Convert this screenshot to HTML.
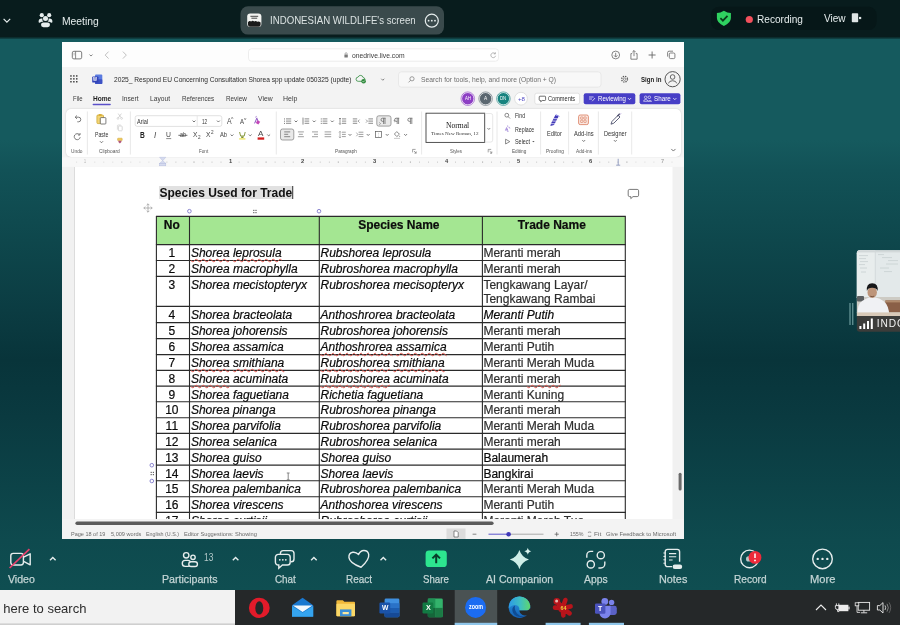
<!DOCTYPE html>
<html lang="en">
<head>
<meta charset="utf-8">
<title>Zoom Meeting</title>
<style>
*{box-sizing:border-box;margin:0;padding:0}
html,body{width:900px;height:625px;overflow:hidden;background:#0f5053;font-family:"Liberation Sans",sans-serif}
.abs{position:absolute}
.t{position:absolute;white-space:nowrap;transform-origin:0 50%;line-height:1}
#stage{will-change:transform;position:absolute;left:0;top:0;width:900px;height:625px;overflow:hidden;background:linear-gradient(180deg,#155a5e 0,#155a5e 140px,#125257 170px,#0e474c 241px,#0b3c42 311px,#08343a 360px,#0a3a40 417px,#0c4348 487px,#0e4a4e 540px,#0f4e51 590px)}
/* ---------- zoom top bar ---------- */
#topbar{position:absolute;left:0;top:0;width:900px;height:39px;background:linear-gradient(180deg,#081c1d 0,#081c1d 36.6px,#0d3638 38px,#11484b 39px)}
/* ---------- zoom bottom bar ---------- */
#botbar{position:absolute;left:0;top:540px;width:900px;height:50px;background:transparent}
/* ---------- taskbar ---------- */
#taskbar{position:absolute;left:0;top:590px;width:900px;height:35px;background:#252829}
/* ---------- shared window ---------- */
#win{position:absolute;left:62px;top:42px;width:622px;height:497px;background:#f3f3f3;overflow:hidden}
#wi{position:absolute;left:-62px;top:-42px;width:900px;height:625px}
#btool{position:absolute;left:62px;top:42px;width:622px;height:25px;background:#fdfdfd}
#ribbon{position:absolute;left:66px;top:108.5px;width:614.5px;height:48px;background:#fff;border-radius:5px;box-shadow:0 0 2px rgba(0,0,0,.18)}
#page{position:absolute;left:74px;top:167px;width:598.5px;height:352px;background:#fff;overflow:hidden;border-left:1px solid #dcdcdc}
/* ---------- document ---------- */
#doc{position:absolute;left:-75px;top:-167px;width:700px;height:540px;font-family:"Liberation Sans",sans-serif;font-size:12px;color:#111}
.c{position:absolute;white-space:nowrap;font-size:12px;line-height:14px;color:#0a0a0a;-webkit-text-stroke:0.2px currentColor;overflow:visible}
.c.n{text-align:center}
.c.g{color:#2e2e2e}
.c.it{font-style:italic}
.c.hd{font-weight:bold;text-align:center;color:#0c0c0c}
.c u,.sq{text-decoration:underline wavy #e0574f;text-decoration-thickness:0.6px;text-underline-offset:0.5px;text-decoration-skip-ink:none}
</style>
</head>
<body>
<div id="stage">

<!-- ============ SHARED WINDOW ============ -->
<div id="win"><div id="wi">
  <div id="btool"></div>
<!--BROWSER-->
<svg class="abs" style="left:0;top:0" width="900" height="625" viewBox="0 0 900 625" fill="none"><rect x="72.3" y="51.3" width="9.4" height="7.6" rx="1.6" stroke="#6d6d6d" stroke-width="0.9"/><path d="M75.6 51.3v7.6" stroke="#6d6d6d" stroke-width="0.8"/><path d="M73.6 53.3h1M73.6 54.8h1" stroke="#6d6d6d" stroke-width="0.6"/><path d="M89.5 54.55 l1.5 1.5 l1.5 -1.5" stroke="#666" stroke-width="0.8"/><path d="M108.6 51.6l-3.4 3.5l3.4 3.5" stroke="#b9b9b9" stroke-width="0.9"/><path d="M122.9 51.6l3.4 3.5l-3.4 3.5" stroke="#b9b9b9" stroke-width="0.9"/><rect x="248.5" y="48.8" width="250" height="12.4" rx="3" fill="#fff" stroke="#e9e9e9" stroke-width="0.8"/><rect x="344.4" y="54.6" width="3.4" height="2.8" rx="0.5" fill="#7a7a7a"/><path d="M345.1 54.6v-0.9a1 1 0 0 1 2 0v0.9" stroke="#7a7a7a" stroke-width="0.6"/><path d="M495 53.6a2.4 2.4 0 1 0 .6 2.2" stroke="#9a9a9a" stroke-width="0.7"/><path d="M495.4 52.3v1.6h-1.6" stroke="#9a9a9a" stroke-width="0.7"/><circle cx="615.7" cy="55" r="3.9" stroke="#666" stroke-width="0.8"/><path d="M615.7 52.8v4M614 55.4l1.7 1.7l1.7-1.7" stroke="#666" stroke-width="0.8"/><path d="M632.2 53.6h-1.3v5.6h6.2v-5.6h-1.3" stroke="#666" stroke-width="0.8"/><path d="M634 56.2v-5.6M632.3 52.2l1.7-1.7l1.7 1.7" stroke="#666" stroke-width="0.8"/><path d="M648.6 55h7M652.1 51.5v7" stroke="#666" stroke-width="0.9"/><rect x="669.3" y="53" width="5.6" height="5.6" rx="1.2" stroke="#666" stroke-width="0.8"/><path d="M667.6 56.6v-4a1.4 1.4 0 0 1 1.4-1.4h4" stroke="#666" stroke-width="0.8"/></svg>
<div class="t" style="left:351.5px;top:51.5px;font-size:7.5px;transform:scaleX(0.900);color:#3c3c3c">onedrive.live.com</div>
<!--/BROWSER-->
<!--WORDHDR-->
<svg class="abs" style="left:0;top:0" width="900" height="625" viewBox="0 0 900 625" fill="none"><rect x="70.2" y="75.2" width="1.5" height="1.5" fill="#444"/><rect x="70.2" y="78.1" width="1.5" height="1.5" fill="#444"/><rect x="70.2" y="81.0" width="1.5" height="1.5" fill="#444"/><rect x="73.1" y="75.2" width="1.5" height="1.5" fill="#444"/><rect x="73.1" y="78.1" width="1.5" height="1.5" fill="#444"/><rect x="73.1" y="81.0" width="1.5" height="1.5" fill="#444"/><rect x="76.0" y="75.2" width="1.5" height="1.5" fill="#444"/><rect x="76.0" y="78.1" width="1.5" height="1.5" fill="#444"/><rect x="76.0" y="81.0" width="1.5" height="1.5" fill="#444"/><rect x="95" y="74.6" width="7.3" height="9.4" rx="1" fill="#5a7be0"/><rect x="95" y="79.3" width="7.3" height="4.7" rx="0.8" fill="#3d52c4"/><rect x="92.2" y="76.4" width="6.2" height="6.2" rx="0.9" fill="#3143b8"/><path d="M358.2 81.3h4.6a1.9 1.9 0 0 0 .3-3.8a2.6 2.6 0 0 0-5-.4a2.1 2.1 0 0 0 .1 4.2z" stroke="#2f8a3c" stroke-width="0.8"/><circle cx="363.6" cy="81.3" r="2.3" fill="#2f8a3c"/><path d="M362.5 81.3l.8.8l1.4-1.5" stroke="#fff" stroke-width="0.6"/><path d="M381.3 78.75 l1.5 1.5 l1.5 -1.5" stroke="#666" stroke-width="0.8"/><rect x="398.5" y="71.8" width="202.5" height="15.4" rx="3" fill="#f8f8f8" stroke="#e4e4e4" stroke-width="0.8"/><circle cx="412" cy="78.8" r="2.1" stroke="#777" stroke-width="0.7"/><path d="M410.5 80.4l-2 2" stroke="#777" stroke-width="0.7"/><circle cx="624.6" cy="79.2" r="2.9" stroke="#555" stroke-width="1.3" stroke-dasharray="1.3 1"/><circle cx="624.6" cy="79.2" r="1.2" stroke="#555" stroke-width="0.6"/><circle cx="672.6" cy="79.2" r="7.6" stroke="#444" stroke-width="0.9"/><circle cx="672.6" cy="77" r="2.3" stroke="#444" stroke-width="0.8"/><path d="M668.4 83.4a4.3 3.4 0 0 1 8.4 0" stroke="#444" stroke-width="0.8"/><rect x="92.6" y="103.7" width="18.2" height="1.5" rx="0.7" fill="#5b50c9"/><circle cx="467.8" cy="98.7" r="6.2" fill="#8d3fc4" stroke="#fff" stroke-width="0.8"/><circle cx="467.8" cy="98.7" r="6.8" stroke="#8d3fc4" stroke-width="0.6"/><circle cx="485.6" cy="98.7" r="6.2" fill="#5b6770" stroke="#fff" stroke-width="0.8"/><circle cx="485.6" cy="98.7" r="6.8" stroke="#5b6770" stroke-width="0.6"/><circle cx="503.4" cy="98.7" r="6.2" fill="#17837f" stroke="#fff" stroke-width="0.8"/><circle cx="503.4" cy="98.7" r="6.8" stroke="#17837f" stroke-width="0.6"/><circle cx="521" cy="98.7" r="6.4" fill="#fff" stroke="#d6d6d6" stroke-width="0.7"/><rect x="534.8" y="93.2" width="44.8" height="11" rx="2" fill="#fff" stroke="#d9d9d9" stroke-width="0.7"/><path d="M540 96.2h4.8a.8.8 0 0 1 .8.8v2.7a.8.8 0 0 1-.8.8h-2.6l-1.5 1.3v-1.3h-.7a.8.8 0 0 1-.8-.8v-2.7a.8.8 0 0 1 .8-.8z" stroke="#333" stroke-width="0.7"/><rect x="583.7" y="93.2" width="51.6" height="11" rx="2" fill="#473ec6"/><rect x="639.6" y="93.2" width="40.8" height="11" rx="2" fill="#473ec6"/><path d="M589 97h4.6M589 99h3M592.2 101.2l2.8-3.2" stroke="#fff" stroke-width="0.7"/><path d="M628.0 98.15 l1.5 1.5 l1.5 -1.5" stroke="#fff" stroke-width="0.8"/><circle cx="645.7" cy="97.3" r="1.3" stroke="#fff" stroke-width="0.6"/><circle cx="649.3" cy="97.3" r="1.3" stroke="#fff" stroke-width="0.6"/><path d="M643.6 101.3a2.1 1.8 0 0 1 4.2 0zM648.2 101.3a2.1 1.8 0 0 1 3.4 0z" stroke="#fff" stroke-width="0.6"/><path d="M673.3 98.15 l1.5 1.5 l1.5 -1.5" stroke="#fff" stroke-width="0.8"/></svg>
<div class="t" style="left:114.3px;top:75.6px;font-size:7.6px;transform:scaleX(0.875);color:#2b2b2b">2025_ Respond EU Concerning Consultation Shorea spp update 050325 (updte)</div>
<div class="t" style="left:93.4px;top:77.1px;font-size:5px;font-weight:bold;transform:scaleX(0.848);color:#fff">W</div>
<div class="t" style="left:421.0px;top:75.7px;font-size:7.4px;transform:scaleX(0.912);color:#6e6e6e">Search for tools, help, and more (Option + Q)</div>
<div class="t" style="left:640.6px;top:75.5px;font-size:7.6px;font-weight:bold;transform:scaleX(0.806);color:#222">Sign in</div>
<div class="t" style="left:72.7px;top:95.0px;font-size:7.6px;transform:scaleX(0.785);color:#3a3a3a">File</div>
<div class="t" style="left:92.6px;top:95.0px;font-size:7.6px;font-weight:bold;transform:scaleX(0.863);color:#1e1e1e">Home</div>
<div class="t" style="left:121.8px;top:95.0px;font-size:7.6px;transform:scaleX(0.874);color:#3a3a3a">Insert</div>
<div class="t" style="left:150.4px;top:95.0px;font-size:7.6px;transform:scaleX(0.877);color:#3a3a3a">Layout</div>
<div class="t" style="left:181.8px;top:95.0px;font-size:7.6px;transform:scaleX(0.829);color:#3a3a3a">References</div>
<div class="t" style="left:226.0px;top:95.0px;font-size:7.6px;transform:scaleX(0.835);color:#3a3a3a">Review</div>
<div class="t" style="left:258.0px;top:95.0px;font-size:7.6px;transform:scaleX(0.894);color:#3a3a3a">View</div>
<div class="t" style="left:283.3px;top:95.0px;font-size:7.6px;transform:scaleX(0.916);color:#3a3a3a">Help</div>
<div class="t" style="left:464.8px;top:96.6px;font-size:4.6px;transform:scaleX(0.940);color:#fff">AH</div>
<div class="t" style="left:484.0px;top:96.5px;font-size:4.8px;color:#fff">A</div>
<div class="t" style="left:500.3px;top:96.6px;font-size:4.6px;transform:scaleX(0.934);color:#fff">DN</div>
<div class="t" style="left:517.6px;top:95.9px;font-size:6px;transform:scaleX(1.023);color:#5048c4">+8</div>
<div class="t" style="left:548.2px;top:95.3px;font-size:7px;transform:scaleX(0.801);color:#2b2b2b">Comments</div>
<div class="t" style="left:598.0px;top:95.3px;font-size:7px;transform:scaleX(0.867);color:#fff">Reviewing</div>
<div class="t" style="left:654.3px;top:95.3px;font-size:7px;transform:scaleX(0.894);color:#fff">Share</div>
<!--/WORDHDR-->
  <div id="ribbon"></div>
<!--RIBBON-->
<svg class="abs" style="left:0;top:0" width="900" height="625" viewBox="0 0 900 625" fill="none"><path d="M87.4 111.5v43" stroke="#e2e2e2" stroke-width="0.8"/><path d="M130.4 111.5v43" stroke="#e2e2e2" stroke-width="0.8"/><path d="M276.3 111.5v43" stroke="#e2e2e2" stroke-width="0.8"/><path d="M421.6 111.5v43" stroke="#e2e2e2" stroke-width="0.8"/><path d="M497 111.5v43" stroke="#e2e2e2" stroke-width="0.8"/><path d="M540.6 111.5v43" stroke="#e2e2e2" stroke-width="0.8"/><path d="M568.6 111.5v43" stroke="#e2e2e2" stroke-width="0.8"/><path d="M598.4 111.5v43" stroke="#e2e2e2" stroke-width="0.8"/><path d="M631.7 111.5v43" stroke="#e2e2e2" stroke-width="0.8"/><path d="M75.3 117.2h3.2a2.3 2.3 0 0 1 0 4.6h-1.2" stroke="#5a5a5a" stroke-width="0.8"/><path d="M76.9 115.5l-1.7 1.7l1.7 1.7" stroke="#5a5a5a" stroke-width="0.8"/><path d="M79.4 134.6a3 3 0 1 0 .8 2.6" stroke="#5a5a5a" stroke-width="0.8"/><path d="M80 133v2h-2" stroke="#5a5a5a" stroke-width="0.8"/><rect x="96.9" y="115" width="6.6" height="8.6" rx="1" fill="#f3d575" stroke="#c9a227" stroke-width="0.7"/><rect x="98.6" y="114.1" width="3.2" height="1.8" rx="0.6" fill="#d9b03a"/><rect x="100.3" y="117.6" width="5.6" height="6.4" rx="0.8" fill="#fff" stroke="#4a4a4a" stroke-width="0.7"/><path d="M100.0 141.25 l1.5 1.5 l1.5 -1.5" stroke="#555" stroke-width="0.8"/><path d="M118.2 113.6l3 4.2M121.4 113.6l-3 4.2" stroke="#c4c4c4" stroke-width="0.7"/><circle cx="118" cy="118.4" r="0.9" stroke="#c4c4c4" stroke-width="0.6"/><circle cx="121.6" cy="118.4" r="0.9" stroke="#c4c4c4" stroke-width="0.6"/><rect x="118.4" y="126" width="3.8" height="4.8" rx="0.7" stroke="#c9c9c9" stroke-width="0.7"/><path d="M117.4 129.6v-3.8a.8.8 0 0 1 .8-.8h2.6" stroke="#c9c9c9" stroke-width="0.6"/><rect x="117.6" y="138.2" width="4.6" height="2.4" rx="0.5" fill="#f0c95a" stroke="#caa033" stroke-width="0.5"/><path d="M118.4 140.8h3v1.2l-1.5 1.6l-1.5-1.6z" fill="#b0567a"/><rect x="135.2" y="115.7" width="86.6" height="10.7" rx="2" fill="#fff" stroke="#d4d4d4" stroke-width="0.7"/><path d="M197.2 116v10" stroke="#dedede" stroke-width="0.7"/><path d="M192.6 120.6 l1.4 1.4 l1.4 -1.4" stroke="#555" stroke-width="0.8"/><path d="M217.0 120.6 l1.4 1.4 l1.4 -1.4" stroke="#555" stroke-width="0.8"/><path d="M254.6 123.4l2.2-5.2l1.2 2.8" stroke="#7a3fb8" stroke-width="0.9"/><path d="M257.4 120.2l2.8 1.6l-1.8 2.6l-2.6-1.4z" fill="#c246b8"/><path d="M255.2 117.4l1-0.9l1 .9" stroke="#7a3fb8" stroke-width="0.6"/><path d="M166.2 138.6h5" stroke="#5a5a5a" stroke-width="0.7"/><path d="M178.400 135.300h9" stroke="#444" stroke-width="0.800"/><path d="M230.6 134.5 l1.4 1.4 l1.4 -1.4" stroke="#555" stroke-width="0.8"/><path d="M239.6 132l1 4h3.6l1-4" stroke="#7c8f2e" stroke-width="0.9"/><path d="M240.9 136.4h2.9l-.5 1.6h-1.9z" fill="#7c8f2e"/><rect x="239.2" y="138.3" width="6.2" height="1.2" fill="#e9e24a"/><path d="M248.79999999999998 134.5 l1.4 1.4 l1.4 -1.4" stroke="#555" stroke-width="0.8"/><rect x="257.6" y="137.4" width="6.6" height="2.3" fill="#d21f1f"/><path d="M267.3 134.5 l1.4 1.4 l1.4 -1.4" stroke="#555" stroke-width="0.8"/><rect x="284" y="118.5" width="0.9" height="0.9" fill="#5a5a5a"/><rect x="284" y="120.7" width="0.9" height="0.9" fill="#5a5a5a"/><rect x="284" y="122.9" width="0.9" height="0.9" fill="#5a5a5a"/><path d="M286 118.9h5.2" stroke="#5a5a5a" stroke-width="0.7"/><path d="M286 121.1h5.2" stroke="#5a5a5a" stroke-width="0.7"/><path d="M286 123.3h5.2" stroke="#5a5a5a" stroke-width="0.7"/><path d="M294.6 120.6 l1.4 1.4 l1.4 -1.4" stroke="#555" stroke-width="0.8"/><path d="M303 117.6v7" stroke="#5a5a5a" stroke-width="0.7"/><path d="M304.6 118.9h4.6" stroke="#5a5a5a" stroke-width="0.7"/><path d="M304.6 121.1h4.6" stroke="#5a5a5a" stroke-width="0.7"/><path d="M304.6 123.3h4.6" stroke="#5a5a5a" stroke-width="0.7"/><path d="M312.8 120.6 l1.4 1.4 l1.4 -1.4" stroke="#555" stroke-width="0.8"/><rect x="320.8" y="118.5" width="0.9" height="0.9" fill="#5a5a5a"/><rect x="320.8" y="120.7" width="0.9" height="0.9" fill="#5a5a5a"/><rect x="320.8" y="122.9" width="0.9" height="0.9" fill="#5a5a5a"/><path d="M322.6 118.9h4.8" stroke="#5a5a5a" stroke-width="0.7"/><path d="M322.6 121.1h4.8" stroke="#5a5a5a" stroke-width="0.7"/><path d="M322.6 123.3h4.8" stroke="#5a5a5a" stroke-width="0.7"/><path d="M330.90000000000003 120.6 l1.4 1.4 l1.4 -1.4" stroke="#555" stroke-width="0.8"/><path d="M340 118v6.4M339 119l1-1l1 1M339 123.4l1 1l1-1" stroke="#5a5a5a" stroke-width="0.6"/><path d="M342 118.9h4.2" stroke="#5a5a5a" stroke-width="0.7"/><path d="M342 121.1h4.2" stroke="#5a5a5a" stroke-width="0.7"/><path d="M342 123.3h4.2" stroke="#5a5a5a" stroke-width="0.7"/><path d="M352.8 118.9h4.4" stroke="#5a5a5a" stroke-width="0.7"/><path d="M352.8 121.1h4.4" stroke="#5a5a5a" stroke-width="0.7"/><path d="M352.8 123.3h4.4" stroke="#5a5a5a" stroke-width="0.7"/><path d="M359.6 119.6l-1.5 1.5l1.5 1.5" stroke="#5a5a5a" stroke-width="0.6"/><path d="M368.4 118.9h4.6" stroke="#5a5a5a" stroke-width="0.7"/><path d="M368.4 121.1h4.6" stroke="#5a5a5a" stroke-width="0.7"/><path d="M368.4 123.3h4.6" stroke="#5a5a5a" stroke-width="0.7"/><path d="M366 119.6l1.5 1.5l-1.5 1.5" stroke="#5a5a5a" stroke-width="0.6"/><rect x="376.8" y="115.8" width="14.2" height="10.3" rx="2" fill="#e9e9e9" stroke="#7d7d7d" stroke-width="0.7"/><path d="M383.59999999999997 118.2v5.8M385.0 118.2v5.8M385.59999999999997 118.2h-3a1.6 1.6 0 0 0 0 3.2h1" stroke="#5a5a5a" stroke-width="0.7"/><path d="M379.2 122.4l1.4 1.2l-1.4 1.2" stroke="#5a5a5a" stroke-width="0.5"/><path d="M397.2 118.2v5.8M398.6 118.2v5.8M399.2 118.2h-3a1.6 1.6 0 0 0 0 3.2h1" stroke="#5a5a5a" stroke-width="0.7"/><path d="M395 119.8l-1.2 1.2l1.2 1.2" stroke="#5a5a5a" stroke-width="0.5"/><path d="M410.4 118.2v5.8M411.8 118.2v5.8M412.4 118.2h-3a1.6 1.6 0 0 0 0 3.2h1" stroke="#5a5a5a" stroke-width="0.7"/><rect x="280.5" y="129" width="13.3" height="11" rx="2" fill="#e9e9e9" stroke="#7d7d7d" stroke-width="0.7"/><path d="M284.2 131.9h6" stroke="#5a5a5a" stroke-width="0.7"/><path d="M284.2 134.3h4" stroke="#5a5a5a" stroke-width="0.7"/><path d="M284.2 136.7h6" stroke="#5a5a5a" stroke-width="0.7"/><path d="M297.9 131.9h6" stroke="#777" stroke-width="0.7"/><path d="M298.9 134.3h4" stroke="#777" stroke-width="0.7"/><path d="M297.9 136.7h6" stroke="#777" stroke-width="0.7"/><path d="M312 131.9h6" stroke="#777" stroke-width="0.7"/><path d="M314 134.3h4" stroke="#777" stroke-width="0.7"/><path d="M312 136.7h6" stroke="#777" stroke-width="0.7"/><path d="M324.6 131.9h6.6" stroke="#777" stroke-width="0.7"/><path d="M324.6 134.3h6.6" stroke="#777" stroke-width="0.7"/><path d="M324.6 136.7h6.6" stroke="#777" stroke-width="0.7"/><path d="M340 131.4v6.4M339 132.4l1-1l1 1M339 136.8l1 1l1-1" stroke="#777" stroke-width="0.6"/><path d="M342 132.2h3.8" stroke="#777" stroke-width="0.7"/><path d="M342 134.4h3.8" stroke="#777" stroke-width="0.7"/><path d="M342 136.6h3.8" stroke="#777" stroke-width="0.7"/><path d="M348.6 134.10000000000002 l1.4 1.4 l1.4 -1.4" stroke="#555" stroke-width="0.8"/><path d="M358.6 132.2h4.8" stroke="#777" stroke-width="0.7"/><path d="M358.6 134.4h4.8" stroke="#777" stroke-width="0.7"/><path d="M358.6 136.6h4.8" stroke="#777" stroke-width="0.7"/><path d="M356.4 132.6l1.4 1.8l-1.4 1.8" stroke="#777" stroke-width="0.6"/><path d="M366.8 134.10000000000002 l1.4 1.4 l1.4 -1.4" stroke="#555" stroke-width="0.8"/><rect x="375.6" y="131.4" width="5.8" height="6" stroke="#5a5a5a" stroke-width="0.7"/><path d="M378.5 131.4v6" stroke="#aaa" stroke-width="0.5" stroke-dasharray="0.8 0.8"/><path d="M385.8 134.10000000000002 l1.4 1.4 l1.4 -1.4" stroke="#555" stroke-width="0.8"/><path d="M394.4 134l2.4-2.4l2.6 2.6l-2.6 2.4z" stroke="#5a5a5a" stroke-width="0.7"/><path d="M399.8 135.4q.8 1.2 0 1.8q-.8-.6 0-1.8z" fill="#5a5a5a"/><path d="M394 138.4h6" stroke="#bbb" stroke-width="0.8"/><path d="M404.20000000000005 134.10000000000002 l1.4 1.4 l1.4 -1.4" stroke="#555" stroke-width="0.8"/><path d="M412.59999999999997 152.39999999999998v-3h3" stroke="#666" stroke-width="0.6"/><path d="M414.0 151.0l2.2 2.2M416.2 151.39999999999998v1.8h-1.8" stroke="#666" stroke-width="0.6"/><path d="M488.2 152.39999999999998v-3h3" stroke="#666" stroke-width="0.6"/><path d="M489.6 151.0l2.2 2.2M491.8 151.39999999999998v1.8h-1.8" stroke="#666" stroke-width="0.6"/><rect x="426" y="113.2" width="58.7" height="29.2" fill="#fff" stroke="#3f3f3f" stroke-width="0.9"/><path d="M484.7 113.5h6a2 2 0 0 1 2 2v24.6a2 2 0 0 1-2 2h-6" stroke="#dcdcdc" stroke-width="0.7"/><path d="M487.5 128.15 l1.3 1.3 l1.3 -1.3" stroke="#555" stroke-width="0.8"/><circle cx="506.8" cy="115.2" r="1.9" stroke="#5a5a5a" stroke-width="0.7"/><path d="M508.2 116.7l1.8 1.8" stroke="#5a5a5a" stroke-width="0.7"/><path d="M505.4 130.6l1.2-3l1.2 3M505.8 129.8h1.6" stroke="#7a55c9" stroke-width="0.6"/><path d="M508.4 127.2q1.6-.4 1.4 1.4M508.6 131.4q-1.8.4-1.6-1" stroke="#7a55c9" stroke-width="0.5"/><path d="M507.6 125.4v1.4" stroke="#7a55c9" stroke-width="0.5"/><path d="M505.6 139.2l4.2 2.4l-4.2 2.4z" stroke="#5a5a5a" stroke-width="0.7"/><path d="M532.2 141l1.2 1.3l1.2-1.3z" fill="#555"/><path d="M551 123.6l4.4-8.6l3.2 1.6l-4.6 8.4l-3.6 1z" fill="#4038b8"/><path d="M553.4 118.6l5.6.2M552.2 121l5.8.2M550.8 123.6l5 .2" stroke="#fff" stroke-width="0.7"/><path d="M555.8 114.6l3.600 1.8" stroke="#8f8ae6" stroke-width="1"/><rect x="578.6" y="115" width="9.8" height="9.6" rx="1.6" fill="#fbe9e2" stroke="#d9785a" stroke-width="0.8"/><rect x="580.6" y="116.9" width="2.3" height="2.3" rx="0.4" stroke="#d9785a" stroke-width="0.6"/><rect x="580.6" y="120.2" width="2.3" height="2.3" rx="0.4" stroke="#d9785a" stroke-width="0.6"/><rect x="583.9" y="116.9" width="2.3" height="2.3" rx="0.4" stroke="#d9785a" stroke-width="0.6"/><rect x="583.9" y="120.2" width="2.3" height="2.3" rx="0.4" stroke="#d9785a" stroke-width="0.6"/><path d="M582.3000000000001 140.10000000000002 l1.4 1.4 l1.4 -1.4" stroke="#555" stroke-width="0.8"/><path d="M611 124.2l1-2.800l6.200-6.200l1.800 1.800l-6.200 6.200z" stroke="#4c4f6b" stroke-width="0.9"/><path d="M617.4 116.200l2.400-2.400" stroke="#4c4f6b" stroke-width="1.4"/><path d="M619.800 114.600l1.200-1.200" stroke="#9a7bd0" stroke-width="0.7"/><path d="M613.9 140.10000000000002 l1.4 1.4 l1.4 -1.4" stroke="#555" stroke-width="0.8"/><path d="M671.3 148.95 l2.1 2.1 l2.1 -2.1" stroke="#555" stroke-width="0.8"/></svg>
<div class="t" style="left:70.9px;top:147.9px;font-size:6.2px;transform:scaleX(0.777);color:#555">Undo</div>
<div class="t" style="left:99.0px;top:147.9px;font-size:6.2px;transform:scaleX(0.785);color:#555">Clipboard</div>
<div class="t" style="left:198.9px;top:147.9px;font-size:6.2px;transform:scaleX(0.743);color:#555">Font</div>
<div class="t" style="left:335.0px;top:147.9px;font-size:6.2px;transform:scaleX(0.758);color:#555">Paragraph</div>
<div class="t" style="left:450.0px;top:147.9px;font-size:6.2px;transform:scaleX(0.712);color:#555">Styles</div>
<div class="t" style="left:511.7px;top:147.9px;font-size:6.2px;transform:scaleX(0.756);color:#555">Editing</div>
<div class="t" style="left:546.0px;top:147.9px;font-size:6.2px;transform:scaleX(0.772);color:#555">Proofing</div>
<div class="t" style="left:575.7px;top:147.9px;font-size:6.2px;transform:scaleX(0.763);color:#555">Add-ins</div>
<div class="t" style="left:94.9px;top:130.6px;font-size:7px;transform:scaleX(0.743);color:#333">Paste</div>
<div class="t" style="left:137.0px;top:117.7px;font-size:7px;transform:scaleX(0.800);color:#333">Arial</div>
<div class="t" style="left:202.0px;top:117.7px;font-size:7px;transform:scaleX(0.668);color:#333">12</div>
<div class="t" style="left:139.6px;top:130.5px;font-size:9px;font-weight:bold;transform:scaleX(0.739);color:#222">B</div>
<div class="t" style="left:154.4px;top:130.7px;font-size:8.6px;font-style:italic;transform:scaleX(0.921);color:#444">I</div>
<div class="t" style="left:166.3px;top:130.6px;font-size:8px;transform:scaleX(0.848);color:#444">U</div>
<div class="t" style="left:179.9px;top:131.1px;font-size:7.4px;transform:scaleX(0.730);color:#444">ab</div>
<div class="t" style="left:193.2px;top:131.0px;font-size:8px;transform:scaleX(0.825);color:#444">X</div>
<div class="t" style="left:197.6px;top:135.1px;font-size:5px;transform:scaleX(0.935);color:#444">2</div>
<div class="t" style="left:206.4px;top:131.0px;font-size:8px;transform:scaleX(0.825);color:#444">X</div>
<div class="t" style="left:210.8px;top:129.5px;font-size:5px;transform:scaleX(0.935);color:#444">2</div>
<div class="t" style="left:226.6px;top:117.2px;font-size:8.4px;transform:scaleX(0.823);color:#444">A</div>
<div class="t" style="left:231.0px;top:117.1px;font-size:5px;transform:scaleX(1.023);color:#444">^</div>
<div class="t" style="left:240.0px;top:118.1px;font-size:7.4px;transform:scaleX(0.811);color:#444">A</div>
<div class="t" style="left:244.2px;top:116.6px;font-size:4.4px;transform:scaleX(1.093);color:#444">v</div>
<div class="t" style="left:220.3px;top:131.2px;font-size:7.6px;transform:scaleX(0.764);color:#444">Ab</div>
<div class="t" style="left:258.2px;top:129.8px;font-size:7.6px;transform:scaleX(1.066);color:#444">A</div>
<div class="t" style="left:445.6px;top:120.5px;font-size:8.6px;font-family:'Liberation Serif',serif;transform:scaleX(0.884);color:#111">Normal</div>
<div class="t" style="left:431.3px;top:130.6px;font-size:5px;font-family:'Liberation Serif',serif;transform:scaleX(1.028);color:#333">Times New Roman, 12</div>
<div class="t" style="left:514.9px;top:112.4px;font-size:7px;transform:scaleX(0.742);color:#333">Find</div>
<div class="t" style="left:514.9px;top:125.7px;font-size:7px;transform:scaleX(0.751);color:#333">Replace</div>
<div class="t" style="left:514.9px;top:138.1px;font-size:7px;transform:scaleX(0.776);color:#333">Select</div>
<div class="t" style="left:547.2px;top:129.6px;font-size:7px;transform:scaleX(0.809);color:#333">Editor</div>
<div class="t" style="left:573.9px;top:129.6px;font-size:7px;transform:scaleX(0.822);color:#333">Add-ins</div>
<div class="t" style="left:604.1px;top:129.6px;font-size:7px;transform:scaleX(0.807);color:#333">Designer</div>
<!--/RIBBON-->
<!--RULER-->
<svg class="abs" style="left:0;top:0" width="900" height="625" viewBox="0 0 900 625" fill="none"><rect x="62" y="157.400" width="622" height="9.400" fill="#f8f8f8"/><rect x="76.3" y="161.700" width="0.8" height="0.8" fill="#cacaca"/><rect x="94.4" y="161.700" width="0.8" height="0.8" fill="#cacaca"/><rect x="103.4" y="161.700" width="0.8" height="0.8" fill="#cacaca"/><rect x="112.4" y="161.700" width="0.8" height="0.8" fill="#cacaca"/><path d="M121.8 161.3v1.7" stroke="#cacaca" stroke-width="0.7"/><rect x="130.4" y="161.700" width="0.8" height="0.8" fill="#cacaca"/><rect x="139.5" y="161.700" width="0.8" height="0.8" fill="#cacaca"/><rect x="148.5" y="161.700" width="0.8" height="0.8" fill="#cacaca"/><rect x="166.5" y="161.700" width="0.8" height="0.8" fill="#a6a6a6"/><rect x="175.5" y="161.700" width="0.8" height="0.8" fill="#a6a6a6"/><rect x="184.6" y="161.700" width="0.8" height="0.8" fill="#a6a6a6"/><path d="M194.0 161.3v1.7" stroke="#a6a6a6" stroke-width="0.7"/><rect x="202.6" y="161.700" width="0.8" height="0.8" fill="#a6a6a6"/><rect x="211.6" y="161.700" width="0.8" height="0.8" fill="#a6a6a6"/><rect x="220.6" y="161.700" width="0.8" height="0.8" fill="#a6a6a6"/><rect x="238.7" y="161.700" width="0.8" height="0.8" fill="#a6a6a6"/><rect x="247.7" y="161.700" width="0.8" height="0.8" fill="#a6a6a6"/><rect x="256.7" y="161.700" width="0.8" height="0.8" fill="#a6a6a6"/><path d="M266.1 161.3v1.7" stroke="#a6a6a6" stroke-width="0.7"/><rect x="274.7" y="161.700" width="0.8" height="0.8" fill="#a6a6a6"/><rect x="283.8" y="161.700" width="0.8" height="0.8" fill="#a6a6a6"/><rect x="292.8" y="161.700" width="0.8" height="0.8" fill="#a6a6a6"/><rect x="310.8" y="161.700" width="0.8" height="0.8" fill="#a6a6a6"/><rect x="319.8" y="161.700" width="0.8" height="0.8" fill="#a6a6a6"/><rect x="328.9" y="161.700" width="0.8" height="0.8" fill="#a6a6a6"/><path d="M338.3 161.3v1.7" stroke="#a6a6a6" stroke-width="0.7"/><rect x="346.9" y="161.700" width="0.8" height="0.8" fill="#a6a6a6"/><rect x="355.9" y="161.700" width="0.8" height="0.8" fill="#a6a6a6"/><rect x="364.9" y="161.700" width="0.8" height="0.8" fill="#a6a6a6"/><rect x="383.0" y="161.700" width="0.8" height="0.8" fill="#a6a6a6"/><rect x="392.0" y="161.700" width="0.8" height="0.8" fill="#a6a6a6"/><rect x="401.0" y="161.700" width="0.8" height="0.8" fill="#a6a6a6"/><path d="M410.4 161.3v1.7" stroke="#a6a6a6" stroke-width="0.7"/><rect x="419.0" y="161.700" width="0.8" height="0.8" fill="#a6a6a6"/><rect x="428.1" y="161.700" width="0.8" height="0.8" fill="#a6a6a6"/><rect x="437.1" y="161.700" width="0.8" height="0.8" fill="#a6a6a6"/><rect x="455.1" y="161.700" width="0.8" height="0.8" fill="#a6a6a6"/><rect x="464.1" y="161.700" width="0.8" height="0.8" fill="#a6a6a6"/><rect x="473.2" y="161.700" width="0.8" height="0.8" fill="#a6a6a6"/><path d="M482.6 161.3v1.7" stroke="#a6a6a6" stroke-width="0.7"/><rect x="491.2" y="161.700" width="0.8" height="0.8" fill="#a6a6a6"/><rect x="500.2" y="161.700" width="0.8" height="0.8" fill="#a6a6a6"/><rect x="509.2" y="161.700" width="0.8" height="0.8" fill="#a6a6a6"/><rect x="527.3" y="161.700" width="0.8" height="0.8" fill="#a6a6a6"/><rect x="536.3" y="161.700" width="0.8" height="0.8" fill="#a6a6a6"/><rect x="545.3" y="161.700" width="0.8" height="0.8" fill="#a6a6a6"/><path d="M554.7 161.3v1.7" stroke="#a6a6a6" stroke-width="0.7"/><rect x="563.3" y="161.700" width="0.8" height="0.8" fill="#a6a6a6"/><rect x="572.4" y="161.700" width="0.8" height="0.8" fill="#a6a6a6"/><rect x="581.4" y="161.700" width="0.8" height="0.8" fill="#a6a6a6"/><rect x="599.4" y="161.700" width="0.8" height="0.8" fill="#a6a6a6"/><rect x="608.4" y="161.700" width="0.8" height="0.8" fill="#a6a6a6"/><rect x="617.5" y="161.700" width="0.8" height="0.8" fill="#a6a6a6"/><path d="M626.9 161.3v1.7" stroke="#a6a6a6" stroke-width="0.7"/><rect x="635.5" y="161.700" width="0.8" height="0.8" fill="#cacaca"/><rect x="644.5" y="161.700" width="0.8" height="0.8" fill="#cacaca"/><rect x="653.5" y="161.700" width="0.8" height="0.8" fill="#cacaca"/><rect x="671.6" y="161.700" width="0.8" height="0.8" fill="#cacaca"/><path d="M159.6 157.3h6.2l-3.1 3.4z" fill="#d6dbef" stroke="#b4bcde" stroke-width="0.5"/><path d="M159.6 163.400l3.100-2.700l3.100 2.700z" fill="#d6dbef" stroke="#b4bcde" stroke-width="0.5"/><rect x="159.600" y="163.400" width="6.200" height="2.400" fill="#d6dbef" stroke="#b4bcde" stroke-width="0.5"/><path d="M618.2 158.800v6.200M616.200 165.200h4" stroke="#7f8ab5" stroke-width="0.8"/></svg>
<div class="t" style="left:228.5px;top:159.4px;font-size:5.6px;font-weight:bold;transform:scaleX(1.029);color:#444">1</div>
<div class="t" style="left:300.6px;top:159.4px;font-size:5.6px;font-weight:bold;transform:scaleX(1.029);color:#444">2</div>
<div class="t" style="left:372.8px;top:159.4px;font-size:5.6px;font-weight:bold;transform:scaleX(1.029);color:#444">3</div>
<div class="t" style="left:444.9px;top:159.4px;font-size:5.6px;font-weight:bold;transform:scaleX(1.029);color:#444">4</div>
<div class="t" style="left:517.0px;top:159.4px;font-size:5.6px;font-weight:bold;transform:scaleX(1.029);color:#444">5</div>
<div class="t" style="left:589.2px;top:159.4px;font-size:5.6px;font-weight:bold;transform:scaleX(1.029);color:#444">6</div>
<div class="t" style="left:661.4px;top:159.4px;font-size:5.6px;font-weight:bold;transform:scaleX(1.029);color:#b0b0b0">7</div>
<div class="t" style="left:84.2px;top:159.0px;font-size:5.4px;transform:scaleX(0.667);color:#b0b0b0">1</div>
<!--/RULER-->
  <div id="page">
    <div id="doc">
      <div class="abs" style="left:158.5px;top:185.5px;width:135px;height:13px;background:#e1e1e1"></div>
      <div class="t" style="left:159.5px;top:186.5px;font-weight:bold;font-size:12px;color:#111">Species Used for Trade</div>
<!--DOC-->
<svg class="abs" style="left:0;top:0" width="700" height="540" viewBox="0 0 700 540"><rect x="156.4" y="216.4" width="468.9" height="28.19999999999999" fill="#a4e692"/><g stroke="#2a2a2a" stroke-width="1.1" fill="none"><line x1="155.9" y1="216.4" x2="625.8" y2="216.4"/><line x1="155.9" y1="244.6" x2="625.8" y2="244.6"/><line x1="155.9" y1="260.5" x2="625.8" y2="260.5"/><line x1="155.9" y1="276.4" x2="625.8" y2="276.4"/><line x1="155.9" y1="306.4" x2="625.8" y2="306.4"/><line x1="155.9" y1="322.6" x2="625.8" y2="322.6"/><line x1="155.9" y1="338.6" x2="625.8" y2="338.6"/><line x1="155.9" y1="354.6" x2="625.8" y2="354.6"/><line x1="155.9" y1="370.4" x2="625.8" y2="370.4"/><line x1="155.9" y1="386.1" x2="625.8" y2="386.1"/><line x1="155.9" y1="401.8" x2="625.8" y2="401.8"/><line x1="155.9" y1="417.8" x2="625.8" y2="417.8"/><line x1="155.9" y1="433.4" x2="625.8" y2="433.4"/><line x1="155.9" y1="449.1" x2="625.8" y2="449.1"/><line x1="155.9" y1="465.1" x2="625.8" y2="465.1"/><line x1="155.9" y1="480.7" x2="625.8" y2="480.7"/><line x1="155.9" y1="496.7" x2="625.8" y2="496.7"/><line x1="155.9" y1="512.4" x2="625.8" y2="512.4"/><line x1="155.9" y1="528.2" x2="625.8" y2="528.2"/><line x1="156.4" y1="216.4" x2="156.4" y2="528.2"/><line x1="189.5" y1="216.4" x2="189.5" y2="528.2"/><line x1="319.3" y1="216.4" x2="319.3" y2="528.2"/><line x1="482.4" y1="216.4" x2="482.4" y2="528.2"/><line x1="625.3" y1="216.4" x2="625.3" y2="528.2"/></g></svg>
<div class="c hd" style="left:155.3px;top:218.0px;width:33.1px">No</div>
<div class="c hd" style="left:317.3px;top:218.0px;width:163.1px">Species Name</div>
<div class="c hd" style="left:480.4px;top:218.0px;width:142.9px">Trade Name</div>
<div class="c n" style="left:155.3px;top:246.2px;width:33.1px">1</div>
<div class="c it" style="left:190.9px;top:246.2px;width:127.8px"><u>Shorea</u> <u>leprosula</u></div>
<div class="c it" style="left:320.5px;top:246.2px;width:161.1px">Rubshorea leprosula</div>
<div class="c g" style="left:483.4px;top:246.2px;width:140.9px">Meranti merah</div>
<div class="c n" style="left:155.3px;top:262.1px;width:33.1px">2</div>
<div class="c it" style="left:190.9px;top:262.1px;width:127.8px">Shorea macrophylla</div>
<div class="c it" style="left:320.5px;top:262.1px;width:161.1px">Rubroshorea macrophylla</div>
<div class="c g" style="left:483.4px;top:262.1px;width:140.9px">Meranti merah</div>
<div class="c n" style="left:155.3px;top:278.0px;width:33.1px">3</div>
<div class="c it" style="left:190.9px;top:278.0px;width:127.8px">Shorea mecistopteryx</div>
<div class="c it" style="left:320.5px;top:278.0px;width:161.1px">Rubroshorea mecisopteryx</div>
<div class="c g" style="left:483.4px;top:278.0px;width:140.9px">Tengkawang Layar/<br>Tengkawang Rambai</div>
<div class="c n" style="left:155.3px;top:308.0px;width:33.1px">4</div>
<div class="c it" style="left:190.9px;top:308.0px;width:127.8px">Shorea bracteolata</div>
<div class="c it" style="left:320.5px;top:308.0px;width:161.1px">Anthoshrorea bracteolata</div>
<div class="c " style="left:483.4px;top:308.0px;width:140.9px"><i>Meranti Putih</i></div>
<div class="c n" style="left:155.3px;top:324.2px;width:33.1px">5</div>
<div class="c it" style="left:190.9px;top:324.2px;width:127.8px">Shorea johorensis</div>
<div class="c it" style="left:320.5px;top:324.2px;width:161.1px">Rubroshorea johorensis</div>
<div class="c g" style="left:483.4px;top:324.2px;width:140.9px">Meranti merah</div>
<div class="c n" style="left:155.3px;top:340.2px;width:33.1px">6</div>
<div class="c it" style="left:190.9px;top:340.2px;width:127.8px">Shorea assamica</div>
<div class="c it" style="left:320.5px;top:340.2px;width:161.1px"><u>Anthoshrorea</u> <u>assamica</u></div>
<div class="c g" style="left:483.4px;top:340.2px;width:140.9px">Meranti Putih</div>
<div class="c n" style="left:155.3px;top:356.2px;width:33.1px">7</div>
<div class="c it" style="left:190.9px;top:356.2px;width:127.8px"><u>Shorea</u> <u>smithiana</u></div>
<div class="c it" style="left:320.5px;top:356.2px;width:161.1px"><u>Rubroshorea</u> <u>smithiana</u></div>
<div class="c g" style="left:483.4px;top:356.2px;width:140.9px">Meranti Merah Muda</div>
<div class="c n" style="left:155.3px;top:372.0px;width:33.1px">8</div>
<div class="c it" style="left:190.9px;top:372.0px;width:127.8px"><u>Shorea</u> acuminata</div>
<div class="c it" style="left:320.5px;top:372.0px;width:161.1px"><u>Rubroshorea</u> acuminata</div>
<div class="c g" style="left:483.4px;top:372.0px;width:140.9px">Meranti <u>merah</u></div>
<div class="c n" style="left:155.3px;top:387.7px;width:33.1px">9</div>
<div class="c it" style="left:190.9px;top:387.7px;width:127.8px">Shorea faguetiana</div>
<div class="c it" style="left:320.5px;top:387.7px;width:161.1px">Richetia faguetiana</div>
<div class="c g" style="left:483.4px;top:387.7px;width:140.9px">Meranti Kuning</div>
<div class="c n" style="left:155.3px;top:403.4px;width:33.1px">10</div>
<div class="c it" style="left:190.9px;top:403.4px;width:127.8px">Shorea pinanga</div>
<div class="c it" style="left:320.5px;top:403.4px;width:161.1px">Rubroshorea pinanga</div>
<div class="c g" style="left:483.4px;top:403.4px;width:140.9px">Meranti merah</div>
<div class="c n" style="left:155.3px;top:419.4px;width:33.1px">11</div>
<div class="c it" style="left:190.9px;top:419.4px;width:127.8px">Shorea parvifolia</div>
<div class="c it" style="left:320.5px;top:419.4px;width:161.1px">Rubroshorea parvifolia</div>
<div class="c g" style="left:483.4px;top:419.4px;width:140.9px">Meranti Merah Muda</div>
<div class="c n" style="left:155.3px;top:435.0px;width:33.1px">12</div>
<div class="c it" style="left:190.9px;top:435.0px;width:127.8px">Shorea selanica</div>
<div class="c it" style="left:320.5px;top:435.0px;width:161.1px">Rubroshorea selanica</div>
<div class="c g" style="left:483.4px;top:435.0px;width:140.9px">Meranti merah</div>
<div class="c n" style="left:155.3px;top:450.7px;width:33.1px">13</div>
<div class="c it" style="left:190.9px;top:450.7px;width:127.8px">Shorea guiso</div>
<div class="c it" style="left:320.5px;top:450.7px;width:161.1px">Shorea guiso</div>
<div class="c " style="left:483.4px;top:450.7px;width:140.9px">Balaumerah</div>
<div class="c n" style="left:155.3px;top:466.7px;width:33.1px">14</div>
<div class="c it" style="left:190.9px;top:466.7px;width:127.8px">Shorea laevis</div>
<div class="c it" style="left:320.5px;top:466.7px;width:161.1px">Shorea laevis</div>
<div class="c " style="left:483.4px;top:466.7px;width:140.9px">Bangkirai</div>
<div class="c n" style="left:155.3px;top:482.3px;width:33.1px">15</div>
<div class="c it" style="left:190.9px;top:482.3px;width:127.8px">Shorea palembanica</div>
<div class="c it" style="left:320.5px;top:482.3px;width:161.1px">Rubroshorea palembanica</div>
<div class="c g" style="left:483.4px;top:482.3px;width:140.9px">Meranti Merah Muda</div>
<div class="c n" style="left:155.3px;top:498.3px;width:33.1px">16</div>
<div class="c it" style="left:190.9px;top:498.3px;width:127.8px">Shorea virescens</div>
<div class="c it" style="left:320.5px;top:498.3px;width:161.1px">Anthoshorea virescens</div>
<div class="c g" style="left:483.4px;top:498.3px;width:140.9px">Meranti Putih</div>
<div class="c n" style="left:155.3px;top:514.0px;width:33.1px">17</div>
<div class="c it" style="left:190.9px;top:514.0px;width:127.8px">Shorea curtisii</div>
<div class="c it" style="left:320.5px;top:514.0px;width:161.1px">Rubroshorea curtisii</div>
<div class="c g" style="left:483.4px;top:514.0px;width:140.9px">Meranti Merah Tua</div>
<!--/DOC-->
<!--DOCX-->
<svg class="abs" style="left:0;top:0" width="900" height="625" viewBox="0 0 900 625" fill="none"><path d="M292.6 186v13" stroke="#222" stroke-width="0.8"/><path d="M148 203.800v8.400M143.800 208h8.400M146.600 205.200l1.400-1.400l1.400 1.400M146.600 210.800l1.400 1.400l1.400-1.400M145.200 206.600l-1.400 1.400l1.400 1.400M150.800 206.600l1.400 1.400l-1.400 1.400" stroke="#9a9a9a" stroke-width="0.7"/><circle cx="189.4" cy="211.2" r="1.8" fill="#fff" stroke="#8580cc" stroke-width="0.95"/><circle cx="319" cy="211.2" r="1.8" fill="#fff" stroke="#8580cc" stroke-width="0.95"/><rect x="253.2" y="209.8" width="1.2" height="1.2" fill="#666"/><rect x="253.2" y="212.0" width="1.2" height="1.2" fill="#666"/><rect x="255.39999999999998" y="209.8" width="1.2" height="1.2" fill="#666"/><rect x="255.39999999999998" y="212.0" width="1.2" height="1.2" fill="#666"/><circle cx="151.800" cy="465.2" r="1.8" fill="#fff" stroke="#8580cc" stroke-width="0.95"/><circle cx="151.800" cy="481" r="1.8" fill="#fff" stroke="#8580cc" stroke-width="0.95"/><rect x="150.6" y="471.8" width="1.2" height="1.2" fill="#666"/><rect x="150.6" y="474.0" width="1.2" height="1.2" fill="#666"/><rect x="152.79999999999998" y="471.8" width="1.2" height="1.2" fill="#666"/><rect x="152.79999999999998" y="474.0" width="1.2" height="1.2" fill="#666"/><path d="M629.6 189.400h7.600a1.400 1.400 0 0 1 1.400 1.400v4.400a1.400 1.400 0 0 1-1.400 1.400h-4.200l-2.200 2v-2h-1.200a1.400 1.400 0 0 1-1.400-1.400v-4.400a1.400 1.400 0 0 1 1.400-1.400z" stroke="#6a6a6a" stroke-width="0.9" fill="#fff"/><path d="M288.200 473.200v6.400M286.800 473h2.800M286.800 479.800h2.800" stroke="#555" stroke-width="0.7"/></svg>
<!--/DOCX-->
    </div>
  </div>
<!--STATUS-->
<svg class="abs" style="left:0;top:0" width="900" height="625" viewBox="0 0 900 625" fill="none"><rect x="62" y="519" width="622" height="21" fill="#f3f3f3"/><rect x="672.500" y="167" width="11.500" height="352" fill="#f1f1f1"/><rect x="62" y="167" width="12" height="352" fill="#f1f1f1"/><rect x="75.400" y="521.600" width="418.200" height="3.400" rx="1.700" fill="#5b5b5b"/><rect x="678.600" y="472.800" width="3" height="17.600" rx="1.500" fill="#6a6a6a"/><rect x="446.500" y="528.500" width="19" height="11" fill="#dcdcdc"/><path d="M454 531h2.600l1.600 1.600v4.400h-4.200z" stroke="#444" stroke-width="0.6" fill="#fff"/><path d="M472.600 534.200h3.800" stroke="#555" stroke-width="0.7"/><path d="M554.600 534.200h4.200M556.700 532.100v4.200" stroke="#555" stroke-width="0.7"/><path d="M488.500 534.200h20" stroke="#4a41c6" stroke-width="0.9"/><path d="M508.500 534.200h35" stroke="#8a8a8a" stroke-width="0.7"/><circle cx="508.600" cy="534.200" r="2.300" fill="#4038b8"/><path d="M588.400 532.800v-.8h2.400v.8M588.400 535.600v.8h2.400v-.8" stroke="#666" stroke-width="0.6"/></svg>
<div class="t" style="left:70.6px;top:531.3px;font-size:6px;transform:scaleX(0.921);color:#6a6a6a">Page 18 of 19</div>
<div class="t" style="left:110.6px;top:531.3px;font-size:6px;transform:scaleX(0.930);color:#6a6a6a">5,009 words</div>
<div class="t" style="left:146.0px;top:531.3px;font-size:6px;transform:scaleX(0.892);color:#6a6a6a">English (U.S.)</div>
<div class="t" style="left:184.3px;top:531.3px;font-size:6px;transform:scaleX(0.950);color:#6a6a6a">Editor Suggestions: Showing</div>
<div class="t" style="left:569.5px;top:531.3px;font-size:6px;transform:scaleX(0.880);color:#6a6a6a">155%</div>
<div class="t" style="left:594.4px;top:531.3px;font-size:6px;transform:scaleX(1.080);color:#6a6a6a">Fit</div>
<div class="t" style="left:606.0px;top:531.3px;font-size:6px;transform:scaleX(0.959);color:#6a6a6a">Give Feedback to Microsoft</div>
<!--/STATUS-->
</div></div>

<!-- ============ VIDEO THUMBNAIL ============ -->
<!--THUMB-->
<svg class="abs" style="left:0;top:0" width="900" height="625" viewBox="0 0 900 625" fill="none"><defs><clipPath id="tc"><rect x="856.800" y="250.300" width="60" height="81.400" rx="3"/></clipPath></defs><g clip-path="url(#tc)"><rect x="856" y="250" width="44" height="48" fill="#e3e9ea"/><rect x="856" y="250" width="19.300" height="48" fill="#e8eded"/><rect x="856" y="250" width="44" height="2.400" fill="#d2d8d9"/><path d="M875.300 252v45" stroke="#cfd6d8" stroke-width="0.800"/><path d="M859 255.600h9M859 258.600h7M860 261.600h8M859 264.600h6M860 268h7M861 272h5M878 254.600h6M882 257.600h10M888 260.600h10M886 264h12M880 268h9M884 271.600h8" stroke="#c6cfd1" stroke-width="0.800"/><rect x="856" y="297" width="44" height="16" fill="#cdcbc4"/><rect x="885.400" y="300.400" width="15" height="12" fill="#8a5f47"/><rect x="885.400" y="300.400" width="15" height="2" fill="#b08a6c"/><rect x="857" y="296" width="7" height="5.400" rx="1" fill="#5c6062"/><path d="M857.500 315q-.500-11 5-14.200q4-2.400 6.600-3.200h6.600q4 .600 8 3.600q5 4 5.600 13.800z" fill="#f0f1f4"/><ellipse cx="872.200" cy="292.400" rx="4.700" ry="5.600" fill="#bd957a"/><path d="M866.900 291q-.900-7.600 5.300-7.800q6.300.200 5.400 7.800q-1.200-3.400-5.400-3.300q-4.200-.100-5.300 3.300z" fill="#151618"/><path d="M870.200 296.200q2 .900 4 0" stroke="#5a3a2a" stroke-width="0.700"/><rect x="856" y="312.400" width="44" height="3.800" fill="#d8c9b8"/><rect x="856" y="316" width="44" height="16" fill="#3c3c3a"/><g fill="#fff"><rect x="859.400" y="326" width="2" height="3"/><rect x="863.200" y="323.500" width="2" height="5.500"/><rect x="867" y="321" width="2" height="8"/><rect x="870.800" y="318.500" width="2" height="10.500"/></g></g><path d="M850 303v22M852.800 303v22" stroke="#8dbcbc" stroke-width="0.900"/></svg>
<div class="t" style="left:876.8px;top:319.4px;font-size:10.2px;letter-spacing:0.9px;color:#f1f1f1">INDONESIAN WILDLIFE</div>
<!--/THUMB-->

<!-- ============ ZOOM TOP BAR ============ -->
<div id="topbar"></div>
<!--TOP-->
<svg class="abs" style="left:0;top:0" width="900" height="625" viewBox="0 0 900 625" fill="none"><rect x="240.5" y="6.2" width="203.500" height="28.400" rx="7.500" fill="#3a4a4c"/><rect x="711" y="6.800" width="165.600" height="23.200" rx="8" fill="#061718"/><path d="M3.600 18.900l3.300 3.200l3.300-3.200" stroke="#e6eded" stroke-width="1.200"/><g fill="#e6eded"><circle cx="41.800" cy="15.200" r="2.100"/><circle cx="49.200" cy="15.200" r="2.100"/><circle cx="45.500" cy="18.600" r="2.500"/><path d="M38.600 21.400a3 3 0 0 1 3-3h.800a3.600 3.600 0 0 0 .900 3.300h-1.300a2.600 2.600 0 0 0-2 1.100h-.200a1.200 1.200 0 0 1-1.200-1.400z"/><path d="M52.400 21.400a3 3 0 0 0-3-3h-.800a3.600 3.600 0 0 1-.900 3.300h1.300a2.600 2.600 0 0 1 2 1.100h.200a1.200 1.200 0 0 0 1.200-1.400z"/><rect x="41" y="22.400" width="9" height="4.800" rx="2.400"/></g><rect x="247.200" y="13.400" width="14.200" height="13.500" rx="3" fill="#f4f4f2"/><path d="M248 22.200q1.500-1.800 3.200-.6q1.400-1.600 3 0q1.600-1.400 3 .2q1.600-1 3.400.6v2.300a2 2 0 0 1-2 2h-8.600a2 2 0 0 1-2-2z" fill="#1a1a1a"/><path d="M250.400 16.300h7.800M251.400 18.200h5.800" stroke="#333" stroke-width="0.900"/><circle cx="431.800" cy="20.700" r="6.500" stroke="#e6eded" stroke-width="1.200"/><g fill="#e6eded"><circle cx="428.600" cy="20.700" r="0.900"/><circle cx="431.800" cy="20.700" r="0.900"/><circle cx="435" cy="20.700" r="0.900"/></g><path d="M723.900 10.700q3.400 2.200 7 2.200v5.200q0 5-7 7.800q-7-2.800-7-7.800v-5.200q3.600 0 7-2.200z" fill="#2fd160"/><path d="M720.400 18.200l2.500 2.500l4.600-4.800" stroke="#0b3a1c" stroke-width="1.700"/><circle cx="749.300" cy="19.500" r="3.600" fill="#f2505c"/><rect x="851.800" y="13.300" width="6.400" height="9" rx="0.800" fill="#dfe5e5"/><rect x="859" y="16.900" width="2.200" height="2.200" fill="#dfe5e5"/></svg>
<div class="t" style="left:61.6px;top:15.7px;font-size:11px;transform:scaleX(0.940);color:#e6eded">Meeting</div>
<div class="t" style="left:269.7px;top:14.9px;font-size:11px;transform:scaleX(0.878);color:#dbe2e2">INDONESIAN WILDLIFE's screen</div>
<div class="t" style="left:756.7px;top:13.7px;font-size:11px;transform:scaleX(0.917);color:#e6eded">Recording</div>
<div class="t" style="left:824.0px;top:13.3px;font-size:11px;transform:scaleX(0.914);color:#e6eded">View</div>
<!--/TOP-->

<!-- ============ ZOOM BOTTOM BAR ============ -->
<div id="botbar"></div>
<!--BOT-->
<svg class="abs" style="left:0;top:0" width="900" height="625" viewBox="0 0 900 625" fill="none"><rect x="10.800" y="553.400" width="12.600" height="11.600" rx="2.400" stroke="#e6eded" stroke-width="1.4"/><path d="M23.600 557.200l6.600-3.400v11l-6.600-3.400" stroke="#e6eded" stroke-width="1.4" stroke-linejoin="round"/><path d="M9.600 568l19.800-18.800" stroke="#e8406c" stroke-width="1.700"/><path d="M50.0 560.200l2.800-2.800l2.800 2.800" stroke="#e6eded" stroke-width="1.400"/><path d="M232.79999999999998 560.200l2.800-2.800l2.800 2.800" stroke="#e6eded" stroke-width="1.400"/><path d="M311.09999999999997 560.200l2.800-2.800l2.800 2.800" stroke="#e6eded" stroke-width="1.400"/><path d="M380.5 560.200l2.800-2.800l2.800 2.800" stroke="#e6eded" stroke-width="1.400"/><circle cx="186.200" cy="555.300" r="2.700" stroke="#e6eded" stroke-width="1.4"/><rect x="182.300" y="560.400" width="8.400" height="6" rx="2.800" stroke="#e6eded" stroke-width="1.4"/><circle cx="193" cy="557.300" r="2.200" stroke="#e6eded" stroke-width="1.4" fill="#0e4b4f"/><rect x="188.800" y="561.800" width="8.600" height="4.700" rx="2.300" stroke="#e6eded" stroke-width="1.4" fill="#0e4b4f"/><path d="M280.400 554v-.600a2.800 2.800 0 0 1 2.800-2.800h8a2.800 2.800 0 0 1 2.800 2.800v5.600a2.800 2.800 0 0 1-2.800 2.800h-.400" stroke="#e6eded" stroke-width="1.4"/><path d="M278.200 554.400h9.200a2.800 2.800 0 0 1 2.800 2.800v5a2.800 2.800 0 0 1-2.800 2.800h-5l-3.600 3.200v-3.200h-.600a2.800 2.800 0 0 1-2.800-2.800v-5a2.800 2.800 0 0 1 2.800-2.800z" stroke="#e6eded" stroke-width="1.4" fill="#0e4b4f"/><g fill="#e6eded"><circle cx="279.800" cy="559.800" r="0.900"/><circle cx="282.800" cy="559.800" r="0.900"/><circle cx="285.800" cy="559.800" r="0.900"/></g><path transform="rotate(-10 359.500 559.200)" d="M359.600 567.400q-10.600-6.400-10.200-11.600q.400-4.400 4.600-4.600q3.200 0 5.400 3.200q2.400-3.400 5.800-3q4 .600 4.200 4.600q0 5.200-9.800 11.400z" stroke="#e6eded" stroke-width="1.4" stroke-linejoin="round"/><rect x="425.600" y="550.400" width="21.200" height="16.700" rx="3.400" fill="#2de58f"/><path d="M436.200 563.200v-8.400M432.400 558.400l3.800-3.800l3.800 3.800" stroke="#083c2a" stroke-width="2"/><path d="M519.400 550q2.200 7.200 9.600 9.600q-7.400 2.400-9.600 9.600q-2.200-7.200-9.600-9.600q7.400-2.400 9.600-9.600z" fill="#cfeee8"/><path d="M527.800 547.800q.500 3 3.500 3.500q-3 .500-3.500 3.500q-.500-3-3.500-3.500q3-.500 3.500-3.500z" fill="#d9f3ee"/><path d="M586.800 557.800v-2.400a4 4 0 0 1 4-4h2.400" stroke="#e6eded" stroke-width="1.4"/><circle cx="600.800" cy="555.200" r="3.600" stroke="#e6eded" stroke-width="1.4"/><circle cx="590.800" cy="564.400" r="3.600" stroke="#e6eded" stroke-width="1.4"/><path d="M604.800 561.600v2.400a4 4 0 0 1-4 4h-2.400" stroke="#e6eded" stroke-width="1.4"/><path d="M672 566.600h-4.400a2.400 2.400 0 0 1-2.400-2.400v-12.400a2.400 2.400 0 0 1 2.400-2.400h9.600a2.400 2.400 0 0 1 2.400 2.400v10" stroke="#e6eded" stroke-width="1.4"/><path d="M669 553.600h7.200M669 556.800h7.200M669 560h3.600" stroke="#e6eded" stroke-width="1.100"/><path d="M663.400 553h2.400M663.400 556.400h2.400M663.400 559.800h2.400M663.400 563.200h2.400" stroke="#e6eded" stroke-width="1"/><rect x="672.600" y="564.600" width="9.600" height="4.400" rx="2.200" fill="#e6eded"/><circle cx="749.500" cy="558.900" r="8.800" stroke="#e6eded" stroke-width="1.4"/><circle cx="748.600" cy="558.900" r="2.600" fill="#b9c8c8"/><circle cx="755" cy="557.400" r="6.400" fill="#ee2a3a"/><path d="M755 553.600v4.400" stroke="#fff" stroke-width="1.500"/><circle cx="755" cy="560.400" r="0.900" fill="#fff"/><circle cx="822.500" cy="558.900" r="9.800" stroke="#e6eded" stroke-width="1.4"/><g fill="#e6eded"><circle cx="817.700" cy="558.900" r="1.200"/><circle cx="822.500" cy="558.900" r="1.200"/><circle cx="827.300" cy="558.900" r="1.200"/></g></svg>
<div class="t" style="left:7.8px;top:574.1px;font-size:11px;transform:scaleX(0.963);color:#c4d5d5;-webkit-text-stroke:0.25px #c4d5d5">Video</div>
<div class="t" style="left:162.0px;top:574.1px;font-size:11px;transform:scaleX(0.966);color:#c4d5d5;-webkit-text-stroke:0.25px #c4d5d5">Participants</div>
<div class="t" style="left:275.0px;top:574.1px;font-size:11px;transform:scaleX(0.895);color:#c4d5d5;-webkit-text-stroke:0.25px #c4d5d5">Chat</div>
<div class="t" style="left:345.8px;top:574.1px;font-size:11px;transform:scaleX(0.901);color:#c4d5d5;-webkit-text-stroke:0.25px #c4d5d5">React</div>
<div class="t" style="left:422.8px;top:574.1px;font-size:11px;transform:scaleX(0.879);color:#c4d5d5;-webkit-text-stroke:0.25px #c4d5d5">Share</div>
<div class="t" style="left:486.1px;top:574.1px;font-size:11px;transform:scaleX(0.964);color:#c4d5d5;-webkit-text-stroke:0.25px #c4d5d5">AI Companion</div>
<div class="t" style="left:583.9px;top:574.1px;font-size:11px;transform:scaleX(0.941);color:#c4d5d5;-webkit-text-stroke:0.25px #c4d5d5">Apps</div>
<div class="t" style="left:658.9px;top:574.1px;font-size:11px;transform:scaleX(0.985);color:#c4d5d5;-webkit-text-stroke:0.25px #c4d5d5">Notes</div>
<div class="t" style="left:733.9px;top:574.1px;font-size:11px;transform:scaleX(0.919);color:#c4d5d5;-webkit-text-stroke:0.25px #c4d5d5">Record</div>
<div class="t" style="left:809.7px;top:574.1px;font-size:11px;transform:scaleX(1.014);color:#c4d5d5;-webkit-text-stroke:0.25px #c4d5d5">More</div>
<div class="t" style="left:204.2px;top:553.4px;font-size:10px;transform:scaleX(0.836);color:#b5caca">13</div>
<!--/BOT-->

<!-- ============ TASKBAR ============ -->
<div id="taskbar"></div>
<!--TASK-->
<svg class="abs" style="left:0;top:0" width="900" height="625" viewBox="0 0 900 625" fill="none"><rect x="0" y="590" width="235" height="35" fill="#f2f2f2"/><rect x="0" y="623.400" width="235" height="1.600" fill="#cfcfcf"/><rect x="454.700" y="590" width="42.500" height="35" fill="#4a5253"/><rect x="454.7" y="622.800" width="42.5" height="2.200" fill="#8fc6ea"/><rect x="545.6" y="622.800" width="35.0" height="2.200" fill="#8fc6ea"/><rect x="588.9" y="622.800" width="35.10000000000002" height="2.200" fill="#8fc6ea"/><path fill-rule="evenodd" fill="#e21b2a" d="M259.300 597.700a10.400 10.200 0 1 0 0 20.400a10.400 10.200 0 1 0 0-20.400zM259.300 601.200a4 6.700 0 1 1 0 13.400a4 6.700 0 1 1 0-13.400z"/><path d="M292 605.200l10.600-7.400l10.600 7.400v11.400h-21.200z" fill="#1a78cf"/><path d="M292.800 605.600h19.600l-9.800 6.400z" fill="#f3f8fc"/><path d="M292 606l10.600 6.800l10.600-6.800v10.800h-21.200z" fill="#35a4ee"/><path d="M336.400 601.200a1 1 0 0 1 1-1h5.400l1.600 1.600h9.600a1 1 0 0 1 1 1v12.400a1 1 0 0 1-1 1h-16.600a1 1 0 0 1-1-1z" fill="#f0b93a"/><rect x="336.400" y="603.800" width="18.600" height="12.400" rx="1" fill="#fbd867"/><rect x="340" y="609.400" width="11.400" height="6.800" fill="#3b8fd6"/><rect x="342.600" y="612" width="6.200" height="2.200" fill="#f7e6a0"/><rect x="384.600" y="598.600" width="14.800" height="18.600" rx="1.400" fill="#3f8fe0"/><rect x="384.600" y="603.200" width="14.800" height="4.800" fill="#2a72c8"/><rect x="384.600" y="608" width="14.800" height="4.600" fill="#1c5cb0"/><path d="M384.600 612.600h14.800v3.200a1.400 1.400 0 0 1-1.400 1.400h-13.400z" fill="#164a96"/><rect x="379.400" y="602.600" width="10.800" height="10.800" rx="1.200" fill="#1b53a8"/><rect x="427.800" y="598.600" width="15" height="18.600" rx="1.400" fill="#33b26b"/><rect x="427.800" y="598.600" width="7.500" height="9.300" fill="#1f9255"/><rect x="435.300" y="607.900" width="7.500" height="9.300" fill="#1b7a45"/><rect x="427.800" y="607.900" width="7.500" height="9.300" fill="#15663a"/><rect x="422.500" y="602.600" width="10.800" height="10.800" rx="1.200" fill="#127a43"/><circle cx="475.600" cy="607.400" r="10.500" fill="#1b6cf2"/><defs><linearGradient id="eg" x1="0" y1="0" x2="1" y2="0"><stop offset="0" stop-color="#2c9ae6"/><stop offset="0.55" stop-color="#3fc0c0"/><stop offset="1" stop-color="#5fd66c"/></linearGradient><linearGradient id="eg2" x1="0" y1="0" x2="0" y2="1"><stop offset="0" stop-color="#2a9be4"/><stop offset="1" stop-color="#1560b4"/></linearGradient></defs><circle cx="519.500" cy="607.200" r="10.800" fill="url(#eg2)"/><path d="M508.800 606a10.800 10.800 0 0 1 21.400-.400q.400 4.400-3.400 5h-7.400q.400-5.200-4.200-5.600q-4.200.200-6.400 3.600z" fill="url(#eg)"/><path d="M519.200 610.600h8q2.200-.200 3-2.600q.600 3.400-1.400 6.400q-3.400 1.800-6.600.400q-2.600-1.400-3-4.200z" fill="#252829"/><path d="M515 605.400q-3.200 1.600-2.600 5.600q1 4.600 6.200 5.800q3.600.600 6.600-1q-5.400 1.200-8.200-2.400q-2.800-3.800-2-8z" fill="#0f4c94"/><g stroke="#b8141b" stroke-width="4.600" stroke-linecap="round"><path d="M562.500 608L557.400 602M562.500 608L565.400 600M562.500 608L555 607.600M562.500 608L570.600 606.400M562.500 608L563.400 615.400M562.500 608L569.600 613.400"/></g><circle cx="562.500" cy="608" r="4.600" fill="#b8141b"/><circle cx="556.800" cy="601.400" r="3.300" fill="#b8141b"/><circle cx="556.600" cy="601" r="1.500" fill="#e6b8b0"/><circle cx="611.600" cy="602.400" r="2.700" fill="#7b83eb"/><rect x="607.400" y="605.800" width="9.400" height="9.200" rx="2.400" fill="#5b62c6"/><circle cx="604.800" cy="601.400" r="3.400" fill="#7b83eb"/><path d="M599.400 605.800h11.200v7a5.600 5.600 0 0 1-11.200 0z" fill="#7b83eb"/><rect x="595" y="603.400" width="10.400" height="10.400" rx="1.200" fill="#4b53bc"/><path d="M816 610l5-5l5 5" stroke="#ececec" stroke-width="1.100"/><rect x="838.400" y="604.800" width="10" height="6.400" fill="#ececec"/><rect x="848.400" y="606.600" width="1.200" height="2.800" fill="#ececec"/><path d="M836.400 603.400v2.200M838.800 603.400v2.200M835.400 605.600h4.400v1.800a2.200 2.200 0 0 1-4.400 0zM837.600 609.400v2.200h1.600" stroke="#ececec" stroke-width="0.900"/><rect x="858.200" y="602.400" width="11.400" height="7.800" stroke="#ececec" stroke-width="0.900"/><path d="M863.900 610.200v2.400M860.800 612.800h6.400" stroke="#ececec" stroke-width="0.900"/><rect x="855.200" y="602.800" width="3.600" height="3" stroke="#ececec" stroke-width="0.800" fill="#232626"/><path d="M857 605.800v6.600h3" stroke="#ececec" stroke-width="0.800"/><path d="M877.400 605.600h2.400l3.200-3v10.400l-3.200-3h-2.400z" stroke="#ececec" stroke-width="0.900"/><path d="M885 605.400q1.400 2.300 0 4.600" stroke="#ececec" stroke-width="0.800"/><path d="M887 603.800q2.600 3.800 0 7.800" stroke="#9a9a9a" stroke-width="0.800"/><path d="M889 602.400q3.400 5.200 0 10.600" stroke="#6c6c6c" stroke-width="0.800"/></svg>
<div class="t" style="left:3.3px;top:602.1px;font-size:13px;color:#2c2c2c">here to search</div>
<div class="t" style="left:381.6px;top:604.2px;font-size:7.6px;font-weight:bold;transform:scaleX(0.893);color:#fff">W</div>
<div class="t" style="left:425.6px;top:604.2px;font-size:7.6px;font-weight:bold;transform:scaleX(0.948);color:#fff">X</div>
<div class="t" style="left:468.6px;top:604.0px;font-size:6.4px;font-weight:bold;transform:scaleX(0.839);color:#fff">zoom</div>
<div class="t" style="left:560.4px;top:605.9px;font-size:5.4px;font-weight:bold;color:#f2d23c">64</div>
<div class="t" style="left:598.2px;top:604.9px;font-size:7.4px;font-weight:bold;transform:scaleX(0.930);color:#fff">T</div>
<!--/TASK-->

</div>
</body>
</html>
